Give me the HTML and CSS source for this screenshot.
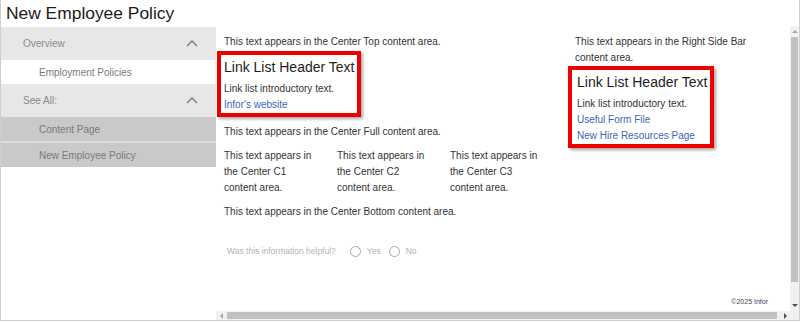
FILE: index.html
```html
<!DOCTYPE html>
<html lang="en">

<head>
    <meta charset="UTF-8">
    <meta name="viewport" content="width=device-width, initial-scale=1.0">
    <title>New Employee Policy</title>
    <link rel="stylesheet" href="styles.css">
</head>

<body>
    <div class="frame">
        <h1 class="title">New Employee Policy</h1>
        <div class="layout">
            <nav class="sidebar">
                <div class="nav-head">
                    <span>Overview</span>
                    <svg class="chevron" width="12" height="7" viewBox="0 0 12 7"><polyline points="1,6 6,1 11,6" /></svg>
                </div>
                <a class="nav-item">Employment Policies</a>
                <div class="nav-head">
                    <span>See All:</span>
                    <svg class="chevron" width="12" height="7" viewBox="0 0 12 7"><polyline points="1,6 6,1 11,6" /></svg>
                </div>
                <a class="nav-item page">Content Page</a>
                <a class="nav-item page">New Employee Policy</a>
            </nav>

            <div class="viewport">
                <main class="content">
                    <div class="columns">
                        <div class="center">
                            <p>This text appears in the Center Top content area.</p>
                            <div class="linklist">
                                <h3>Link List Header Text</h3>
                                <p class="intro">Link list introductory text.</p>
                                <a href="#">Infor's website</a>
                            </div>
                            <p>This text appears in the Center Full content area.</p>
                            <div class="cols3">
                                <p>This text appears in the Center C1 content area.</p>
                                <p>This text appears in the Center C2 content area.</p>
                                <p>This text appears in the Center C3 content area.</p>
                            </div>
                            <p>This text appears in the Center Bottom content area.</p>
                        </div>
                        <div class="right">
                            <p>This text appears in the Right Side Bar content area.</p>
                            <div class="linklist">
                                <h3>Link List Header Text</h3>
                                <p class="intro">Link list introductory text.</p>
                                <a href="#">Useful Form File</a>
                                <a href="#">New Hire Resources Page</a>
                            </div>
                        </div>
                    </div>

                    <div class="helpful">
                        <span>Was this information helpful?</span>
                        <span class="radio"></span><span>Yes</span>
                        <span class="radio"></span><span>No</span>
                    </div>

                    <div class="footer">©2025 <a href="#">Infor</a></div>
                </main>

                <!-- scrollbars -->
                <div class="vscroll">
                    <div class="sb-btn"><span class="arrow up"></span></div>
                    <div class="thumb-v"></div>
                    <div class="sb-space"></div>
                    <div class="sb-btn"><span class="arrow down"></span></div>
                </div>
                <div class="hscroll">
                    <div class="sb-btn-h"><span class="arrow left"></span></div>
                    <div class="thumb-h"></div>
                    <div class="sb-space"></div>
                    <div class="sb-btn-h"><span class="arrow right"></span></div>
                </div>
                <div class="corner"></div>
            </div>
        </div>
    </div>
</body>

</html>
```

FILE: styles.css
```css
html,
body {
    margin: 0;
    height: 100%;
}

body {
    font-family: "Liberation Sans", Arial, sans-serif;
    background-color: #fff;
    color: #333;
}

p {
    margin: 0;
}

.frame {
    width: 800px;
    height: 321px;
    box-sizing: border-box;
    border: 1px solid #cfcfcf;
    border-top: 0;
    display: flex;
    flex-direction: column;
}

.title {
    flex: none;
    height: 26px;
    line-height: 26px;
    margin: 0;
    padding-left: 5px;
    font-size: 17.4px;
    font-weight: normal;
    color: #1b1b1b;
}

.layout {
    flex: 1;
    min-height: 0;
    display: grid;
    grid-template-columns: 215px 1fr;
}

/* left navigation */
.sidebar {
    padding-top: 1px;
    font-size: 10px;
}

.nav-head {
    height: 33px;
    padding: 0 18px 0 22px;
    background-color: #e7e7e7;
    color: #8a8a8a;
    display: flex;
    align-items: center;
    justify-content: space-between;
}

.chevron polyline {
    fill: none;
    stroke: #7c7c7c;
    stroke-width: 1.4;
}

.nav-item {
    display: block;
    height: 24px;
    line-height: 25px;
    padding-left: 38px;
    color: #7a7a7a;
}

.nav-item.page {
    background-color: #c9c9c9;
}

.nav-item.page + .nav-item.page {
    border-top: 2px solid #dedede;
}

/* main area */
.viewport {
    min-width: 0;
    min-height: 0;
    display: grid;
    grid-template-columns: 1fr 9px;
    grid-template-rows: 1fr 9px;
}

.content {
    min-height: 0;
    overflow: hidden;
    padding: 8px 19px 4px 8px;
    display: flex;
    flex-direction: column;
    font-size: 10px;
    line-height: 16px;
}

.columns {
    display: grid;
    grid-template-columns: 339px 1fr;
    column-gap: 12px;
}

.linklist {
    width: fit-content;
    border: 4px solid #ee0000;
    padding: 3px 3px 0;
    margin: 1px 0 7px -7px;
    box-shadow: 2px 2px 3px rgba(0, 0, 0, 0.35);
}

.right .linklist {
    margin-top: 0;
    padding-left: 5px;
}

.linklist h3 {
    margin: 0 0 5px;
    font-size: 14px;
    line-height: 18px;
    font-weight: normal;
    color: #1e1e1e;
}

.linklist a {
    display: block;
    color: #3b67b6;
    text-decoration: none;
}

.cols3 {
    display: grid;
    grid-template-columns: repeat(3, 95px);
    column-gap: 18px;
    margin: 8px 0;
}

.helpful {
    display: flex;
    align-items: center;
    margin: 25px 0 0 3px;
    font-size: 8.5px;
    line-height: 12px;
    color: #b3b3b3;
}

.radio {
    width: 11px;
    height: 11px;
    box-sizing: border-box;
    border: 1px solid #a8a8a8;
    border-radius: 50%;
    margin: 0 6px 0 14px;
}

.radio ~ .radio {
    margin-left: 8px;
}

.footer {
    margin-top: auto;
    padding-right: 3px;
    text-align: right;
    font-size: 7px;
    line-height: 10px;
    color: #444;
}

.footer a {
    color: #33367a;
    text-decoration: none;
}

/* fake scrollbars */
.vscroll,
.hscroll,
.corner {
    background-color: #f1f1f1;
}

.vscroll {
    display: flex;
    flex-direction: column;
    align-items: center;
}

.hscroll {
    display: flex;
    align-items: center;
}

.sb-btn {
    flex: none;
    width: 9px;
    height: 11px;
    display: flex;
    align-items: center;
    justify-content: center;
}

.sb-btn-h {
    flex: none;
    width: 10px;
    height: 9px;
    display: flex;
    align-items: center;
    justify-content: center;
}

.sb-space {
    flex: 1;
}

.thumb-v {
    width: 7px;
    height: 245px;
    background-color: #c1c1c1;
}

.thumb-h {
    height: 7px;
    width: 550px;
    margin-left: 1px;
    background-color: #c1c1c1;
}

.arrow {
    width: 0;
    height: 0;
    border: 3px solid transparent;
}

.arrow.up {
    border-top: 0;
    border-bottom-color: #a8a8a8;
}

.arrow.down {
    border-bottom: 0;
    border-top-color: #505050;
}

.arrow.left {
    border-left: 0;
    border-right-color: #a8a8a8;
}

.arrow.right {
    border-right: 0;
    border-left-color: #505050;
}
```
